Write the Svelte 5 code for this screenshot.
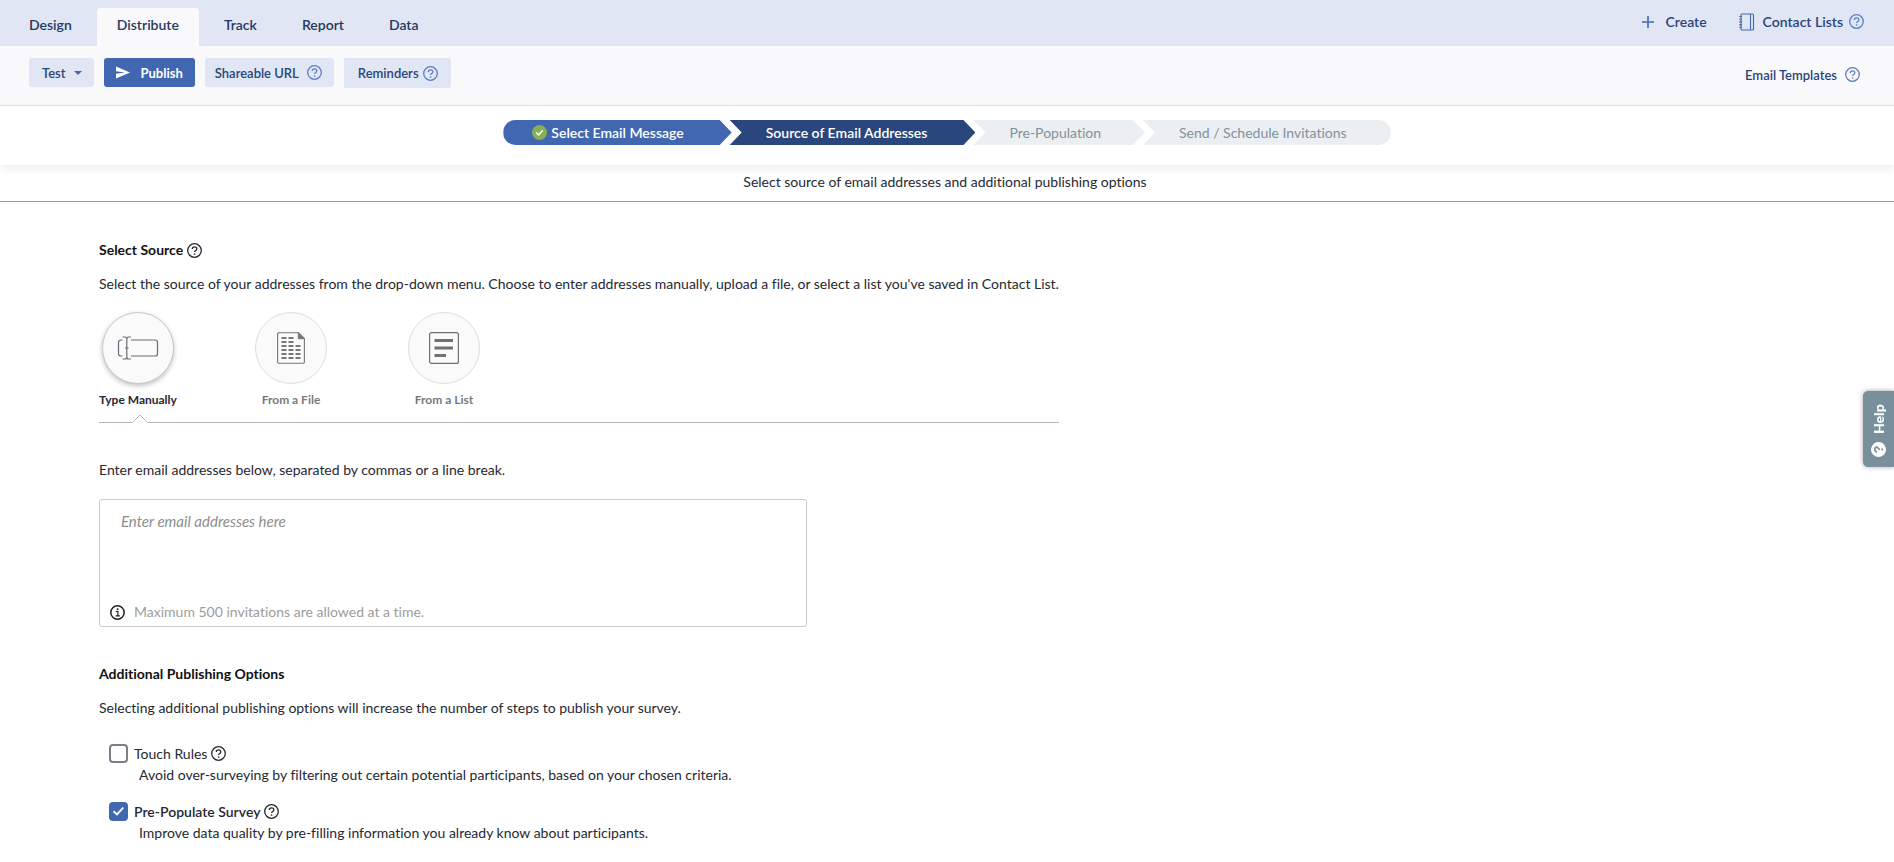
<script>
  const tabs = ['Design', 'Distribute', 'Track', 'Report', 'Data'];
  let activeTab = $state('Distribute');
  let source = $state('manual');
  let emails = $state('');
  let touchRules = $state(false);
  let prePopulate = $state(true);
</script>

{#snippet help(label)}
  <button class="help-icon" type="button" aria-label={label}>
    <svg viewBox="0 0 15 15" width="15" height="15" aria-hidden="true">
      <circle cx="7.5" cy="7.5" r="6.8" fill="none" stroke="currentColor" stroke-width="1.3" />
      <path d="M5.3 6.1C5.3 4.7 6.2 3.9 7.5 3.9S9.8 4.7 9.8 5.9C9.8 7.4 7.6 7.5 7.6 9.1" fill="none" stroke="currentColor" stroke-width="1.3" />
      <circle cx="7.6" cy="11" r="0.85" fill="currentColor" />
    </svg>
  </button>
{/snippet}

<header class="topbar">
  <nav class="tabs">
    {#each tabs as tab}
      <a href="#{tab.toLowerCase()}" class:active={activeTab === tab} onclick={() => (activeTab = tab)}>{tab}</a>
    {/each}
  </nav>
  <div class="top-actions">
    <button class="link-btn create" type="button">
      <svg viewBox="0 0 12 12" width="12" height="12" aria-hidden="true"><path d="M6 0V12M0 6H12" stroke="#4268b0" stroke-width="1.6" /></svg>
      Create
    </button>
    <div class="with-help">
      <a class="link-btn contacts" href="#contacts">
        <svg viewBox="0 0 16 18" width="16" height="18" aria-hidden="true" fill="none" stroke="#4268b0">
          <rect x="2" y="1" width="12.5" height="16" rx="1" stroke-width="1.1" />
          <path d="M11.5 1V17M0.3 3.5H3M0.3 6.2H3M0.3 8.9H3M0.3 11.6H3M0.3 14.3H3" stroke-width="1.1" />
        </svg>
        Contact Lists
      </a>
      {@render help('About contact lists')}
    </div>
  </div>
</header>

<div class="toolbar">
  <div class="tools">
    <button class="tool" type="button">
      Test
      <svg class="caret" viewBox="0 0 8 4" width="8" height="4" aria-hidden="true"><path d="M0 0H8L4 4Z" fill="#4268b0" /></svg>
    </button>
    <button class="tool primary" type="button">
      <svg viewBox="0 0 14 13" width="14" height="13" aria-hidden="true"><path d="M0 0.5L14 6.5L0 12.5V7.8L9 6.5L0 5.2Z" fill="#fff" /></svg>
      Publish
    </button>
    <div class="tool shareable"><a href="#url">Shareable URL</a>{@render help('About shareable URL')}</div>
    <div class="tool reminders"><a href="#reminders">Reminders</a>{@render help('About reminders')}</div>
  </div>
  <div class="templates"><a href="#templates">Email Templates</a>{@render help('About email templates')}</div>
</div>

<div class="steps-bar">
  <ol class="steps">
    <li class="step done">
      <svg viewBox="0 0 15 15" width="15" height="15" aria-hidden="true">
        <circle cx="7.5" cy="7.5" r="7.5" fill="#8aae56" />
        <path d="M4.2 7.5L6.6 9.9L10.8 5.2" fill="none" stroke="#fff" stroke-width="1.4" />
      </svg>
      Select Email Message
    </li>
    <li class="step current" aria-current="step">Source of Email Addresses</li>
    <li class="step">Pre-Population</li>
    <li class="step last">Send / Schedule Invitations</li>
  </ol>
</div>

<p class="subtitle">Select source of email addresses and additional publishing options</p>

<main>
  <section class="source">
    <h2>Select Source {@render help('About sources')}</h2>
    <p class="intro">Select the source of your addresses from the drop-down menu. Choose to enter addresses manually, upload a file, or select a list you've saved in Contact List.</p>
    <div class="options">
      <button type="button" class="option" class:selected={source === 'manual'} onclick={() => (source = 'manual')}>
        <span class="disc">
          <svg viewBox="0 0 42 24" width="42" height="24" aria-hidden="true" fill="none" stroke="#6c6c74" stroke-width="1.2">
            <path d="M5.5 4H4C2.3 4 1.5 4.8 1.5 6.5V17.5C1.5 19.2 2.3 20 4 20H5.5M14 4H38.5Q40.5 4 40.5 6V18Q40.5 20 38.5 20H14" />
            <path d="M5.5 1H8Q9.8 1 9.8 3V21Q9.8 23 8 23H5.5M14 1H11.6Q9.8 1 9.8 3M14 23H11.6Q9.8 23 9.8 21M8 12H11.6" />
          </svg>
        </span>
        Type Manually
      </button>
      <button type="button" class="option" class:selected={source === 'file'} onclick={() => (source = 'file')}>
        <span class="disc">
          <svg viewBox="0 0 28 32" width="28" height="32" aria-hidden="true" fill="none" stroke="#77777b">
            <path d="M21.5 0.7H2Q0.6 0.7 0.6 2V30Q0.6 31.3 2 31.3H26Q27.4 31.3 27.4 30V6.5Z" stroke-width="1.1" />
            <path d="M21.3 0.7V6.7H27.4Z" fill="#77777b" />
            <path d="M4.5 6H16.5M4.5 10H16.5M4.5 14H23.5M4.5 18H23.5M4.5 22H23.5M4.5 26H23.5" stroke-width="2" stroke-dasharray="5 2" />
          </svg>
        </span>
        From a File
      </button>
      <button type="button" class="option" class:selected={source === 'list'} onclick={() => (source = 'list')}>
        <span class="disc">
          <svg viewBox="0 0 30 32" width="30" height="32" aria-hidden="true" fill="none" stroke="#717175">
            <rect x="0.6" y="0.6" width="28.8" height="30.8" rx="2" stroke-width="1.2" />
            <path d="M5.5 8.5H24M5.5 16H24M5.5 23.5H17" stroke-width="2.8" />
          </svg>
        </span>
        From a List
      </button>
    </div>
    <div class="divider">
      <svg viewBox="0 0 16 10" width="16" height="10" aria-hidden="true"><path d="M0.5 8.5L8 1L15.5 8.5V10H0.5Z" fill="#fff" /><path d="M0 8.5H0.5L8 1L15.5 8.5H16" fill="none" stroke="#b0b9c1" /></svg>
    </div>
  </section>

  <label class="prompt" for="emails">Enter email addresses below, separated by commas or a line break.</label>
  <div class="email-box">
    <textarea id="emails" placeholder="Enter email addresses here" bind:value={emails}></textarea>
    <div class="limit">
      <svg viewBox="0 0 15 15" width="15" height="15" aria-hidden="true">
        <circle cx="7.5" cy="7.5" r="6.7" fill="none" stroke="#202329" stroke-width="1.5" />
        <path d="M5.8 6.5H7.9V10.7M5.6 10.9H9.9" fill="none" stroke="#202329" stroke-width="1.2" />
        <circle cx="7.6" cy="4.2" r="1" fill="#202329" />
      </svg>
      Maximum 500 invitations are allowed at a time.
    </div>
  </div>

  <h2>Additional Publishing Options</h2>
  <p class="intro">Selecting additional publishing options will increase the number of steps to publish your survey.</p>

  <div class="checks">
    <div class="check">
      <div class="check-row">
        <input id="touch" type="checkbox" bind:checked={touchRules} />
        <label for="touch">Touch Rules</label>{@render help('About touch rules')}
      </div>
      <p>Avoid over-surveying by filtering out certain potential participants, based on your chosen criteria.</p>
    </div>
    <div class="check">
      <div class="check-row">
        <input id="prepop" type="checkbox" bind:checked={prePopulate} />
        <label for="prepop" class:strong={prePopulate}>Pre-Populate Survey</label>{@render help('About pre-population')}
      </div>
      <p>Improve data quality by pre-filling information you already know about participants.</p>
    </div>
  </div>
</main>

<button class="help-tab" type="button">
  <svg viewBox="0 0 15 15" width="15" height="15" aria-hidden="true">
    <circle cx="7.5" cy="7.5" r="7.5" fill="#fff" />
    <path d="M5.2 6C5.2 4.5 6.2 3.8 7.5 3.8S9.8 4.6 9.8 5.8C9.8 7.3 7.6 7.3 7.6 8.9" fill="none" stroke="#78909c" stroke-width="1.7" />
    <circle cx="7.6" cy="11.2" r="1.1" fill="#78909c" />
  </svg>
  Help
</button>

<style>
  :global(body) {
    margin: 0;
    background: #fff;
    color: #262833;
    font: 14px/20px Lato, 'Open Sans', sans-serif;
    font-variant-ligatures: none;
  }
  :global(*) { box-sizing: border-box; }
  button { font: inherit; font-variant-ligatures: none; color: inherit; background: none; border: 0; padding: 0; cursor: pointer; }
  a { color: inherit; text-decoration: none; }
  p, h2, ol { margin: 0; padding: 0; }
  svg { display: block; flex: none; }

  .help-icon { display: inline-flex; flex: none; }

  .topbar {
    display: flex;
    justify-content: space-between;
    height: 46px;
    padding: 0 30px 0 9px;
    background: #e0e6f4;
    color: #253860;
    font-weight: 600;
  }
  .tabs { display: flex; gap: 5px; padding-top: 8px; }
  .tabs a { padding: 7px 20px; border-radius: 4px 4px 0 0; }
  .tabs .active { background: #f9f9fc; }
  .top-actions { display: flex; gap: 32px; height: 43px; align-items: center; color: #2a4479; }
  .link-btn { display: flex; align-items: center; }
  .create { gap: 12px; }
  .contacts { gap: 8px; }
  .with-help { display: flex; align-items: center; gap: 6px; }
  .with-help .help-icon, .tool .help-icon, .templates .help-icon { color: #5e7fc2; }

  .toolbar {
    display: flex;
    justify-content: space-between;
    align-items: flex-start;
    height: 60px;
    padding: 12px 34px 0 29px;
    background: #f9f9fc;
    border-bottom: 1px solid #e0e3ef;
    color: #2a4479;
    font-size: 13px;
    font-weight: 600;
  }
  .tools { display: flex; gap: 10px; }
  .tool {
    display: flex;
    align-items: center;
    gap: 8px;
    height: 29px;
    padding: 0 12px 0 13px;
    border-radius: 3px;
    background: #e0e6f4;
  }
  .tool.primary { gap: 11px; padding: 0 12px; background: #4067b0; color: #fff; font-weight: 700; }
  .tool.shareable { gap: 8px; padding: 0 12px 0 10px; }
  .tool.reminders { gap: 4px; height: 30px; padding: 0 13px 0 14px; border-radius: 0 3px 3px 0; }
  .templates { display: flex; align-items: center; gap: 8px; height: 33px; }

  .steps-bar {
    display: flex;
    justify-content: center;
    padding: 14px 0 20px;
    box-shadow: 0 4px 10px rgba(0, 0, 0, 0.07);
  }
  .steps { display: flex; list-style: none; }
  .step {
    display: flex;
    align-items: center;
    justify-content: center;
    gap: 4px;
    height: 25px;
    padding: 0 44px 0 36px;
    margin-left: -2px;
    background: #ebeff2;
    color: #7f919d;
    clip-path: polygon(0 0, calc(100% - 12px) 0, 100% 50%, calc(100% - 12px) 100%, 0 100%, 12px 50%);
  }
  .step.done {
    padding: 0 48px 0 29px;
    margin-left: 0;
    border-radius: 13px 0 0 13px;
    background: #4067b0;
    color: #fff;
    font-weight: 600;
    clip-path: polygon(0 0, calc(100% - 12px) 0, 100% 50%, calc(100% - 12px) 100%, 0 100%);
  }
  .step.current { padding: 0 48px 0 36px; background: #2a477d; color: #fff; font-weight: 600; }
  .step.last {
    border-radius: 0 13px 13px 0;
    clip-path: polygon(0 0, 100% 0, 100% 100%, 0 100%, 12px 50%);
  }

  .subtitle { padding: 7px 4px 9px 0; text-align: center; border-bottom: 1px solid #8ba1b0; }

  main { padding: 38px 99px 20px; }
  h2 { display: flex; align-items: center; gap: 4px; font-size: 14px; line-height: 20px; font-weight: 700; color: #111; }
  h2 .help-icon { color: #262833; }
  .intro { margin-top: 14px; }
  .source { width: fit-content; }
  .options { display: flex; gap: 75px; margin-top: 18px; }
  .option {
    display: flex;
    flex-direction: column;
    align-items: center;
    gap: 7px;
    width: 78px;
    font-size: 12px;
    line-height: 18px;
    font-weight: 700;
    color: #77797e;
    white-space: nowrap;
  }
  .disc {
    display: grid;
    place-items: center;
    width: 72px;
    height: 72px;
    border: 1px solid #dedede;
    border-radius: 50%;
    background: #fafafa;
  }
  .selected { color: #262833; }
  .selected .disc { border-color: #c8c8c8; box-shadow: 0 2px 5px rgba(0, 0, 0, 0.25); }
  .divider { height: 14px; padding: 5px 0 0 33px; border-bottom: 1px solid #b0b9c1; }

  .prompt { display: block; margin-top: 37px; }
  .email-box {
    width: 708px;
    max-width: 100%;
    margin: 19px 0 37px;
    border: 1px solid #ccc;
    border-radius: 3px;
  }
  textarea {
    display: block;
    width: 100%;
    height: 98px;
    padding: 11px 21px;
    border: 0;
    outline: 0;
    resize: none;
    background: transparent;
    color: inherit;
    font: inherit;
  }
  textarea::placeholder { color: #8e8e8e; font-size: 15px; font-style: italic; opacity: 1; }
  .limit { display: flex; align-items: center; gap: 9px; padding: 4px 10px; color: #9c9c9c; }

  .checks { display: grid; gap: 16px; margin: 25px 0 0 10px; }
  .check-row { display: flex; align-items: center; gap: 4px; height: 21px; }
  .check-row label { margin-left: 2px; }
  .check-row .strong { font-weight: 600; }
  .check p { padding-left: 30px; margin-top: 1px; }
  input {
    appearance: none;
    width: 19px;
    height: 19px;
    margin: 0;
    border: 2px solid #7c7c8c;
    border-radius: 4px;
    background: #fff;
  }
  input:checked {
    border-color: #4067b0;
    background: #4067b0 url("data:image/svg+xml,%3Csvg xmlns='http://www.w3.org/2000/svg' viewBox='0 0 15 15'%3E%3Cpath d='M2.5 7.3L6 10.5L12.3 3.7' fill='none' stroke='white' stroke-width='1.9'/%3E%3C/svg%3E") center / 15px no-repeat;
  }

  .help-tab {
    position: fixed;
    right: 0;
    top: 391px;
    display: flex;
    align-items: center;
    gap: 8px;
    padding: 10px 8px;
    width: 31px;
    height: 76px;
    writing-mode: vertical-rl;
    transform: rotate(180deg);
    border-radius: 0 5px 5px 0;
    background: #78909c;
    box-shadow: 0 0 5px rgba(0, 0, 0, 0.35);
    color: #fff;
    font: 900 14px/15px Lato, sans-serif;
  }
  .help-tab svg { transform: rotate(90deg); }
</style>
